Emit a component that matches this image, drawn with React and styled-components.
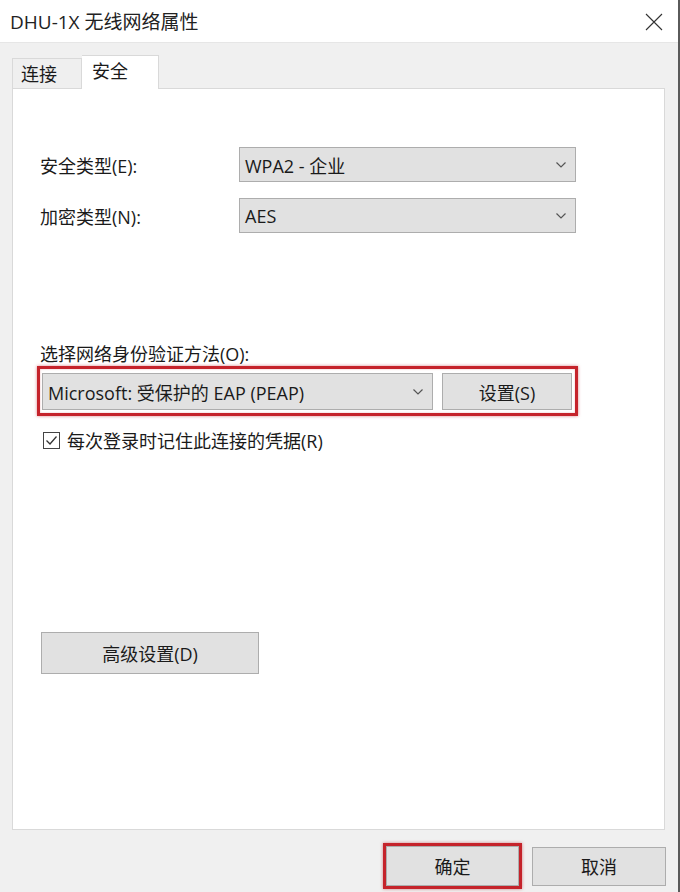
import React from "react";
import styled, { createGlobalStyle } from "styled-components";

const GlobalStyle = createGlobalStyle`
    html, body {
        margin: 0;
        padding: 0;
        background: #f0f0f0;
    }
    body {
        font-family: "Open Sans", "Noto Sans CJK SC", sans-serif;
        color: #1a1a1a;
    }
`;

const Window = styled.div`
    width: 680px;
    height: 892px;
    box-sizing: border-box;
    background: #f0f0f0;
    border-right: 2px solid #5a5a5a;
    display: flex;
    flex-direction: column;
    overflow: hidden;
`;

const TitleBar = styled.div`
    height: 43px;
    flex: none;
    background: #fff;
    border-bottom: 1px solid #e6e6e6;
    box-sizing: border-box;
    display: flex;
    align-items: center;
    justify-content: space-between;
    padding: 0 15px 0 10px;
    font-size: 19px;
    color: #222;
`;

const CloseBtn = styled.div`
    width: 18px;
    height: 18px;
    display: flex;
    align-items: center;
    justify-content: center;
    margin-top: 1px;
`;

const Body = styled.div`
    flex: 1;
    display: flex;
    flex-direction: column;
    padding: 12px 13px 0 12px;
`;

const TabRow = styled.div`
    display: flex;
    align-items: flex-end;
    height: 34px;
    position: relative;
    z-index: 1;
    margin-bottom: -1px;
`;

const Tab = styled.div`
    box-sizing: border-box;
    width: ${p => p.$w}px;
    height: ${p => (p.$active ? 34 : 31)}px;
    padding-left: ${p => (p.$active ? 10 : 8)}px;
    background: ${p => (p.$active ? "#fff" : "#efefef")};
    border: 1px solid #d9d9d9;
    border-bottom: ${p => (p.$active ? "none" : "1px solid #d9d9d9")};
    border-left: ${p => (p.$active ? "none" : "1px solid #d9d9d9")};
    font-size: 18px;
    line-height: 31px;
    color: #1a1a1a;
`;

const Panel = styled.div`
    box-sizing: border-box;
    width: 653px;
    height: 742px;
    background: #fff;
    border: 1px solid #d9d9d9;
    padding: 58px 0 0 27px;
    display: flex;
    flex-direction: column;
`;

const FieldRow = styled.div`
    display: flex;
    align-items: center;
    height: 35px;
    margin-bottom: 16px;
`;

const Label = styled.div`
    width: 199px;
    font-size: 18px;
    white-space: nowrap;
`;

const Select = styled.div`
    box-sizing: border-box;
    width: ${p => p.$w}px;
    height: ${p => p.$h || 35}px;
    background: #e1e1e1;
    border: 1px solid #adadad;
    display: flex;
    align-items: center;
    justify-content: space-between;
    padding: 0 8px 0 5px;
    font-size: 18px;
    white-space: nowrap;
`;

const Chevron = () => (
    <svg width="12" height="8" viewBox="0 0 12 8">
        <path d="M1.5 1.5 L6 6 L10.5 1.5" fill="none" stroke="#555" strokeWidth="1.2" />
    </svg>
);

const SectionLabel = styled.div`
    font-size: 18px;
    line-height: 22px;
    margin-top: 94px;
`;

const Highlight = styled.div`
    display: flex;
    align-items: center;
    gap: ${p => p.$gap || 0}px;
    border: 3px solid #c5232b;
    box-shadow: 0 0 3px rgba(190, 30, 40, 0.55), inset 0 0 2px rgba(190, 30, 40, 0.35);
    padding: ${p => p.$pad || "0"};
    width: fit-content;
`;

const Button = styled.div`
    box-sizing: border-box;
    width: ${p => p.$w}px;
    height: ${p => p.$h}px;
    background: #e1e1e1;
    border: 1px solid #adadad;
    display: flex;
    align-items: center;
    justify-content: center;
    font-size: 18px;
    color: #1a1a1a;
`;

const CheckRow = styled.div`
    display: flex;
    align-items: center;
    gap: 7px;
    margin: 11px 0 0 3px;
    font-size: 18px;
`;

const CheckBox = styled.div`
    width: 17px;
    height: 17px;
    box-sizing: border-box;
    border: 1px solid #444;
    background: #fff;
    display: flex;
    align-items: center;
    justify-content: center;
`;

const AdvancedWrap = styled.div`
    margin: 179px 0 0 1px;
`;

const Footer = styled.div`
    display: flex;
    justify-content: flex-end;
    align-items: center;
    gap: 10px;
    padding-top: 13px;
    margin-right: -1px;
`;

export default function App() {
    return (
        <>
            <GlobalStyle />
            <Window>
                <TitleBar>
                    <span>DHU-1X 无线网络属性</span>
                    <CloseBtn>
                        <svg width="18" height="18" viewBox="0 0 18 18">
                            <path d="M1 1 L17 17 M17 1 L1 17" stroke="#333" strokeWidth="1.1" fill="none" />
                        </svg>
                    </CloseBtn>
                </TitleBar>
                <Body>
                    <TabRow>
                        <Tab $w={70}>连接</Tab>
                        <Tab $w={77} $active>安全</Tab>
                    </TabRow>
                    <Panel>
                        <FieldRow>
                            <Label>安全类型(E):</Label>
                            <Select $w={337}>
                                <span>WPA2 - 企业</span>
                                <Chevron />
                            </Select>
                        </FieldRow>
                        <FieldRow>
                            <Label>加密类型(N):</Label>
                            <Select $w={337}>
                                <span>AES</span>
                                <Chevron />
                            </Select>
                        </FieldRow>

                        <SectionLabel>选择网络身份验证方法(O):</SectionLabel>
                        <Highlight $gap={9} $pad="4px 3px 3px 2px" style={{ marginLeft: -3, marginTop: 1 }}>
                            <Select $w={391} $h={37}>
                                <span>Microsoft: 受保护的 EAP (PEAP)</span>
                                <Chevron />
                            </Select>
                            <Button $w={130} $h={37}>设置(S)</Button>
                        </Highlight>

                        <CheckRow>
                            <CheckBox>
                                <svg width="13" height="11" viewBox="0 0 13 11">
                                    <path d="M1.5 5.5 L5 9 L11.5 1.5" fill="none" stroke="#333" strokeWidth="1.3" />
                                </svg>
                            </CheckBox>
                            <span>每次登录时记住此连接的凭据(R)</span>
                        </CheckRow>

                        <AdvancedWrap>
                            <Button $w={218} $h={42}>高级设置(D)</Button>
                        </AdvancedWrap>
                    </Panel>
                    <Footer>
                        <Highlight>
                            <Button $w={133} $h={40}>确定</Button>
                        </Highlight>
                        <Button $w={134} $h={39}>取消</Button>
                    </Footer>
                </Body>
            </Window>
        </>
    );
}
